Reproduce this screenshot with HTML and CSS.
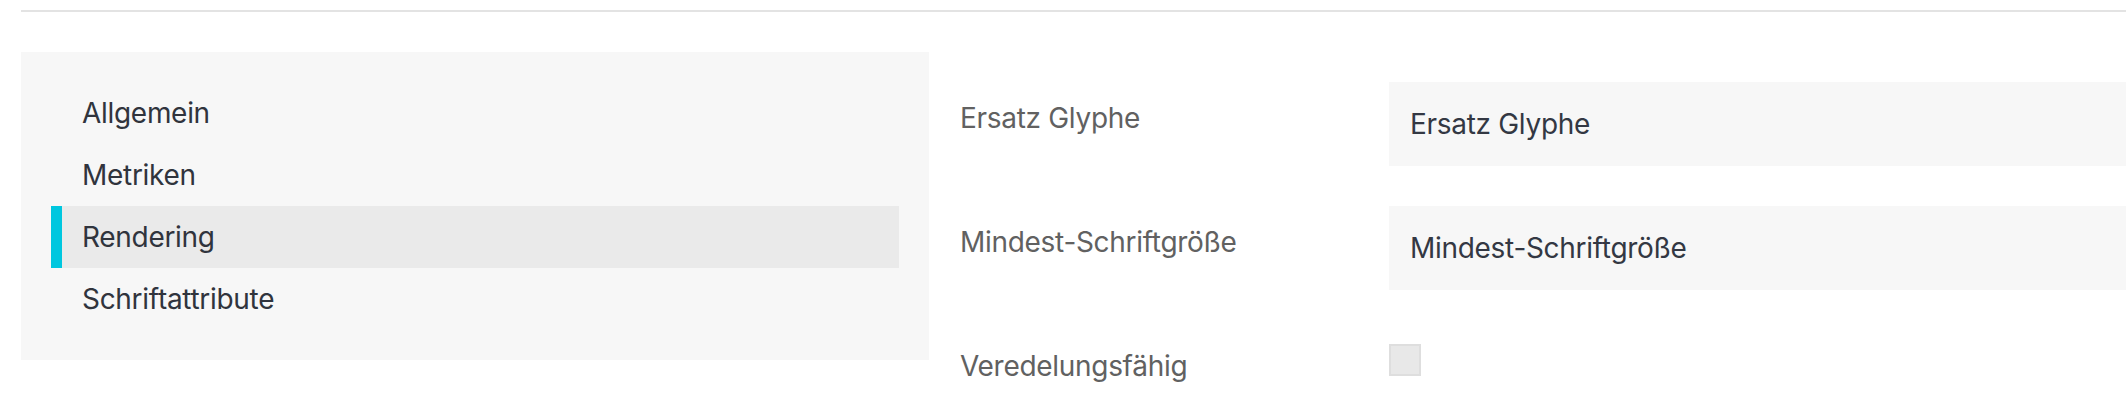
FILE: index.html
```html
<!DOCTYPE html>
<html lang="de">
<head>
<meta charset="utf-8">
<title>Rendering</title>
<link rel="stylesheet" href="styles.css">
</head>
<body>
<div class="page">
  <div class="divider"></div>
  <div class="content">
    <nav class="sidebar">
      <div class="nav-item">Allgemein</div>
      <div class="nav-item">Metriken</div>
      <div class="nav-item active">Rendering</div>
      <div class="nav-item">Schriftattribute</div>
    </nav>
    <section class="form">
      <div class="row">
        <label class="label">Ersatz Glyphe</label>
        <div class="field">Ersatz Glyphe</div>
      </div>
      <div class="row">
        <label class="label">Mindest-Schriftgröße</label>
        <div class="field">Mindest-Schriftgröße</div>
      </div>
      <div class="row">
        <label class="label">Veredelungsfähig</label>
        <span class="checkbox"></span>
      </div>
    </section>
  </div>
</div>
</body>
</html>
```

FILE: styles.css
```css
html, body {
  margin: 0;
  padding: 0;
  background: #ffffff;
}

body {
  font-family: Inter, "Noto Sans", "Liberation Sans", sans-serif;
  font-size: 28px;
  letter-spacing: -0.3px;
  overflow: hidden;
}

.page {
  padding: 10px 0 0 21px;
}

.divider {
  height: 2px;
  background: #e3e3e3;
}

.content {
  display: flex;
  align-items: flex-start;
  margin-top: 40px;
}

.sidebar {
  flex: 0 0 908px;
  box-sizing: border-box;
  background: #f7f7f7;
  padding: 30px 30px;
}

.nav-item {
  height: 62px;
  line-height: 62px;
  padding-left: 31px;
  color: #30343d;
}

.nav-item.active {
  background: #eaeaea;
  border-left: 11px solid #00c7df;
  padding-left: 20px;
}

.form {
  flex: 1;
  padding: 30px 0 0 31px;
}

.row {
  display: flex;
  align-items: flex-start;
  margin-bottom: 40px;
}

.label {
  flex: 0 0 429px;
  padding-top: 19px;
  line-height: 34px;
  color: #616161;
}

.field {
  flex: 1;
  height: 84px;
  line-height: 84px;
  padding-left: 21px;
  background: #f7f7f7;
  color: #333843;
}

.checkbox {
  display: block;
  margin-top: 14px;
  width: 28px;
  height: 28px;
  border: 2px solid #dedede;
  background: #e8e8e8;
}
```
